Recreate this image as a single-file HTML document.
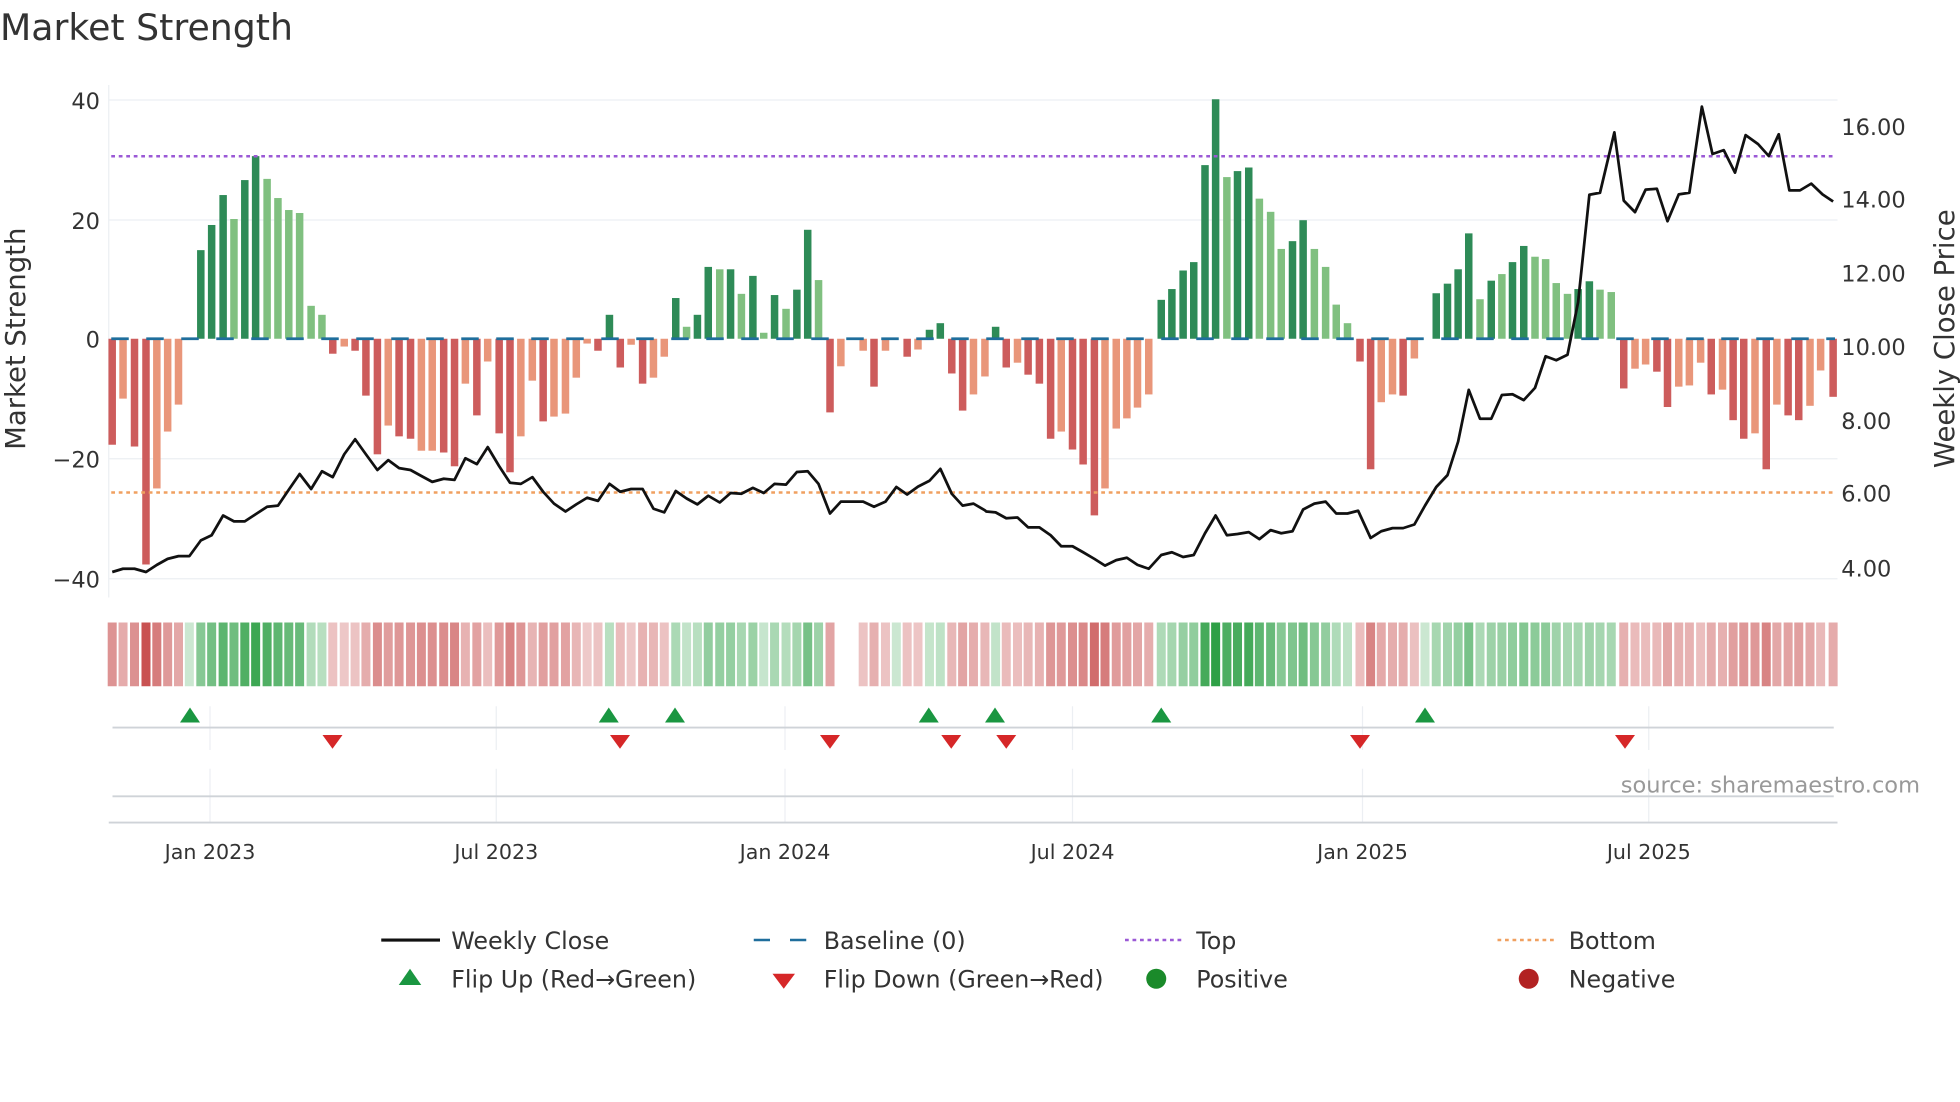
<!DOCTYPE html>
<html><head><meta charset="utf-8"><style>
html,body{margin:0;padding:0;background:#fff;}
svg{display:block;font-family:"DejaVu Sans","Liberation Sans",sans-serif;}
</style></head><body>
<svg id="s" width="1960" height="1102" viewBox="0 0 1568 881.6" xmlns="http://www.w3.org/2000/svg">
<rect width="1568" height="882" fill="#fff"/>
<text x="0" y="32" font-size="29" fill="#333">Market Strength</text>
<g id="grid" stroke="#eceff3" stroke-width="1">
<line x1="87" x2="1470" y1="80" y2="80"/><line x1="87" x2="1470" y1="176" y2="176"/>
<line x1="87" x2="1470" y1="367" y2="367"/><line x1="87" x2="1470" y1="463" y2="463"/>
<line x1="87" x2="87" y1="68" y2="478"/>
</g>
<g font-size="18" fill="#333" text-anchor="end">
<text x="80" y="87">40</text><text x="80" y="183">20</text><text x="80" y="278">0</text>
<text x="80" y="374">−20</text><text x="80" y="470">−40</text>
</g>
<g font-size="18" fill="#333">
<text x="1473" y="108">16.00</text><text x="1473" y="166">14.00</text><text x="1473" y="225">12.00</text>
<text x="1473" y="284">10.00</text><text x="1473" y="343">8.00</text><text x="1473" y="401">6.00</text><text x="1473" y="461">4.00</text>
</g>
<text transform="translate(20,271) rotate(-90)" font-size="22" fill="#333" text-anchor="middle">Market Strength</text>
<text transform="translate(1563,271) rotate(-90)" font-size="22" fill="#333" text-anchor="middle">Weekly Close Price</text>
<g id="bars"></g>
<line x1="89" x2="1468" y1="271" y2="271" stroke="#1f6e9c" stroke-width="2.2" stroke-dasharray="14,14"/>
<line x1="89" x2="1468" y1="125" y2="125" stroke="#9b59d6" stroke-width="2" stroke-dasharray="3,3"/>
<line x1="89" x2="1468" y1="394" y2="394" stroke="#f0a060" stroke-width="2" stroke-dasharray="3,3"/>
<polyline id="price" fill="none" stroke="#111" stroke-width="2.2" stroke-linejoin="round"/>
<g id="heat"></g>
<g stroke="#eceff3" stroke-width="1">
<line x1="168" x2="168" y1="565" y2="600"/><line x1="397" x2="397" y1="565" y2="600"/><line x1="628" x2="628" y1="565" y2="600"/><line x1="858" x2="858" y1="565" y2="600"/><line x1="1090" x2="1090" y1="565" y2="600"/><line x1="1319" x2="1319" y1="565" y2="600"/>
<line x1="168" x2="168" y1="615" y2="658"/><line x1="397" x2="397" y1="615" y2="658"/><line x1="628" x2="628" y1="615" y2="658"/><line x1="858" x2="858" y1="615" y2="658"/><line x1="1090" x2="1090" y1="615" y2="658"/><line x1="1319" x2="1319" y1="615" y2="658"/>
</g>
<line x1="90" x2="1467" y1="582" y2="582" stroke="#cfd3d8" stroke-width="1.5"/>
<line x1="90" x2="1467" y1="637" y2="637" stroke="#cfd3d8" stroke-width="1.5"/>
<line x1="87" x2="1470" y1="658" y2="658" stroke="#cfd3d8" stroke-width="1.5"/>
<g id="marks"></g>
<text x="1536" y="634" font-size="18" fill="#999" text-anchor="end">source: sharemaestro.com</text>
<g font-size="16.5" fill="#333" text-anchor="middle">
<text x="168" y="687">Jan 2023</text><text x="397" y="687">Jul 2023</text><text x="628" y="687">Jan 2024</text>
<text x="858" y="687">Jul 2024</text><text x="1090" y="687">Jan 2025</text><text x="1319" y="687">Jul 2025</text>
</g>
<g font-size="19" fill="#333">
<line x1="305" x2="352" y1="752" y2="752" stroke="#111" stroke-width="2.5"/><text x="361" y="759">Weekly Close</text>
<line x1="603" x2="647" y1="752" y2="752" stroke="#1f6e9c" stroke-width="2" stroke-dasharray="13,16"/><text x="659" y="759">Baseline (0)</text>
<line x1="900" x2="945" y1="752" y2="752" stroke="#9b59d6" stroke-width="2" stroke-dasharray="3,3"/><text x="957" y="759">Top</text>
<line x1="1198" x2="1243" y1="752" y2="752" stroke="#f0a060" stroke-width="2" stroke-dasharray="3,3"/><text x="1255" y="759">Bottom</text>
<polygon points="319,788 337,788 328,775" fill="#1a9641"/><text x="361" y="790">Flip Up (Red→Green)</text>
<polygon points="618,779 636,779 627,791" fill="#d62728"/><text x="659" y="790">Flip Down (Green→Red)</text>
<circle cx="925" cy="783" r="8" fill="#1a8a2a"/><text x="957" y="790">Positive</text>
<circle cx="1223" cy="783" r="8" fill="#b22222"/><text x="1255" y="790">Negative</text>
</g>
</svg>
<script>
var NS="http://www.w3.org/2000/svg";
function el(t,a,p){var e=document.createElementNS(NS,t);for(var k in a)e.setAttribute(k,a[k]);p.appendChild(e);return e;}
var z1=[[176,-17.7,1],[193,-10,0],[211,-18,1],[229,-37.7,1],[246,-25,0],[263,-15.5,0],[280,-11,0],[297,0,0],[315,14.8,1],[332,19,1],[350,24,1],[367,20,0],[384,26.5,1],[401,30.5,1],[419,26.7,0],[436,23.5,0],[453,21.5,0],[470,21,0],[488,5.5,0],[505,4,0],[522,-2.5,1],[540,-1.3,0],[557,-2,1],[574,-9.5,1],[592,-19.3,1],[609,-14.5,0],[626,-16.3,1],[644,-16.7,1],[661,-18.7,0],[678,-18.7,0],[696,-19,1],[713,-21.3,1],[730,-7.5,0],[748,-12.8,1],[765,-3.8,0],[783,-15.8,1],[800,-22.3,1],[817,-16.3,0],[835,-7,0],[852,-13.8,1],[869,-13,0],[887,-12.5,0],[904,-6.5,0],[921,-0.8,0],[938,-2,1],[956,4,1],[973,-4.8,1],[990,-1,0],[1008,-7.5,1],[1025,-6.5,0],[1042,-3,0],[1060,6.8,1],[1077,2,0],[1094,4,1],[1111,12,1],[1129,11.6,0],[1146,11.6,1],[1163,7.5,0],[1181,10.5,1],[1198,1,0],[1215,7.3,1],[1233,5,0],[1250,8.2,1],[1267,18.2,1],[1284,9.8,0],[1302,-12.3,1],[1319,-4.6,0],[1336,0,0],[1354,-2,0],[1371,-8,1],[1389,-2,0],[1406,0,0],[1423,-3,1],[1440,-1.8,0],[1458,1.5,1],[1475,2.6,1],[1493,-5.8,1],[1510,-12,1],[1527,-9.3,0],[1545,-6.3,0]];
var z2=[[25,2,1],[42,-4.8,1],[60,-4,0],[77,-6,1],[95,-7.5,1],[113,-16.7,1],[130,-15.5,0],[148,-18.5,1],[165,-21,1],[183,-29.5,1],[200,-25,0],[218,-15,0],[235,-13.3,0],[252,-11.5,0],[270,-9.3,0],[290,6.5,1],[307,8.3,1],[325,11.4,1],[342,12.8,1],[360,29,1],[377,40,1],[395,27,0],[412,28,1],[430,28.6,1],[447,23.4,0],[465,21.2,0],[482,15,0],[500,16.3,1],[517,19.8,1],[535,15,0],[553,12,0],[570,5.7,0],[588,2.6,0],[608,-3.8,1],[625,-21.8,1],[642,-10.6,0],[660,-9.3,0],[677,-9.5,1],[695,-3.3,0],[712,0,0],[730,7.6,1],[748,9.2,1],[765,11.6,1],[782,17.6,1],[800,6.6,0],[818,9.7,1],[835,10.8,0],[852,12.8,1],[870,15.5,1],[888,13.7,0],[905,13.3,0],[922,9.3,0],[940,7.5,0],[957,8.3,1],[975,9.6,1],[992,8.2,0],[1010,7.8,0],[1030,-8.3,1],[1048,-5,0],[1065,-4.3,0],[1083,-5.5,1],[1100,-11.4,1],[1118,-8,0],[1135,-7.8,0],[1153,-4,0],[1170,-9.3,1],[1188,-8.5,0],[1205,-13.6,1],[1222,-16.7,1],[1240,-15.8,0],[1258,-21.8,1],[1275,-11,0],[1293,-12.8,1],[1310,-13.6,1],[1328,-11.2,0],[1345,-5.3,0],[1365,-9.7,1]];
var bars=[];z1.forEach(function(b){bars.push([b[0]*0.51,b[1],b[2]]);});z2.forEach(function(b){bars.push([784+b[0]*0.5,b[1],b[2]]);});
var g=document.getElementById('bars'),h=document.getElementById('heat');
bars.forEach(function(b){var x=b[0],v=b[1],y0=271,y1=271-v*4.79;var c=v>=0?(b[2]?'#2e8b57':'#80c080'):(b[2]?'#cd5c5c':'#e9967a');
if(Math.abs(v)>0.2)el('rect',{x:x-3,y:Math.min(y0,y1),width:6,height:Math.abs(y1-y0),fill:c},g);
if(x>668&&x<685)return;
var hc=v>=0?'rgba(46,160,70,'+(0.25+Math.abs(v)/45).toFixed(2)+')':'rgba(200,80,80,'+(0.3+Math.abs(v)/55).toFixed(2)+')';
el('rect',{x:x-3.6,y:498,width:7.2,height:51,fill:hc},h);});
var p1=[[176,1448],[193,1440],[211,1440],[229,1448],[246,1430],[263,1415],[280,1408],[297,1408],[315,1368],[332,1355],[350,1305],[367,1320],[384,1320],[401,1302],[419,1283],[436,1280],[453,1240],[470,1200],[488,1238],[505,1193],[522,1208],[540,1150],[557,1112],[574,1150],[592,1190],[609,1165],[626,1185],[644,1190],[661,1205],[678,1220],[696,1212],[713,1215],[730,1160],[748,1175],[765,1132],[783,1180],[800,1222],[817,1225],[835,1208],[852,1245],[869,1275],[887,1295],[904,1277],[921,1260],[938,1268],[956,1225],[973,1245],[990,1238],[1008,1238],[1025,1288],[1042,1297],[1060,1243],[1077,1262],[1094,1277],[1111,1255],[1129,1272],[1146,1248],[1163,1250],[1181,1235],[1198,1248],[1215,1225],[1233,1227],[1250,1195],[1267,1193],[1284,1225],[1302,1300],[1319,1270],[1336,1270],[1354,1270],[1371,1283],[1389,1270],[1406,1233],[1423,1252],[1440,1232],[1458,1217],[1475,1187],[1493,1250],[1510,1280],[1527,1275],[1545,1292]];
var p2=[[10,1295],[25,1297],[42,1312],[60,1310],[77,1335],[95,1335],[113,1355],[130,1383],[148,1383],[165,1398],[183,1415],[200,1432],[218,1418],[235,1412],[252,1430],[270,1440],[290,1405],[307,1398],[325,1410],[342,1405],[360,1350],[377,1305],[395,1355],[412,1352],[430,1347],[447,1365],[465,1342],[482,1350],[500,1345],[517,1290],[535,1275],[553,1270],[570,1300],[588,1300],[605,1293],[625,1362],[642,1345],[660,1337],[677,1337],[695,1328],[712,1280],[730,1233],[748,1203],[765,1118],[782,987],[800,1060],[818,1060],[835,1000],[852,998],[870,1013],[888,982],[905,902],[922,912],[940,898],[957,765],[975,493],[992,488],[1015,335],[1030,508],[1048,537],[1065,480],[1083,478],[1100,560],[1118,492],[1135,488],[1155,270],[1172,390],[1190,380],[1208,437],[1225,342],[1245,365],[1262,395],[1278,340],[1295,482],[1312,482],[1330,465],[1348,492],[1365,510]];
var pts=[];p1.forEach(function(p){pts.push((p[0]*0.51).toFixed(1)+','+(p[1]*0.316).toFixed(1));});p2.forEach(function(p){pts.push((784+p[0]*0.5).toFixed(1)+','+(p[1]*0.316).toFixed(1));});
document.getElementById('price').setAttribute('points',pts.join(' '));
var m=document.getElementById('marks');
[152,487,540,743,796,929,1140].forEach(function(x){el('polygon',{points:(x-8)+',578 '+(x+8)+',578 '+x+',566',fill:'#1a9641'},m);});
[266,496,664,761,805,1088,1300].forEach(function(x){el('polygon',{points:(x-8)+',588 '+(x+8)+',588 '+x+',599',fill:'#d62728'},m);});
</script>
</body></html>
